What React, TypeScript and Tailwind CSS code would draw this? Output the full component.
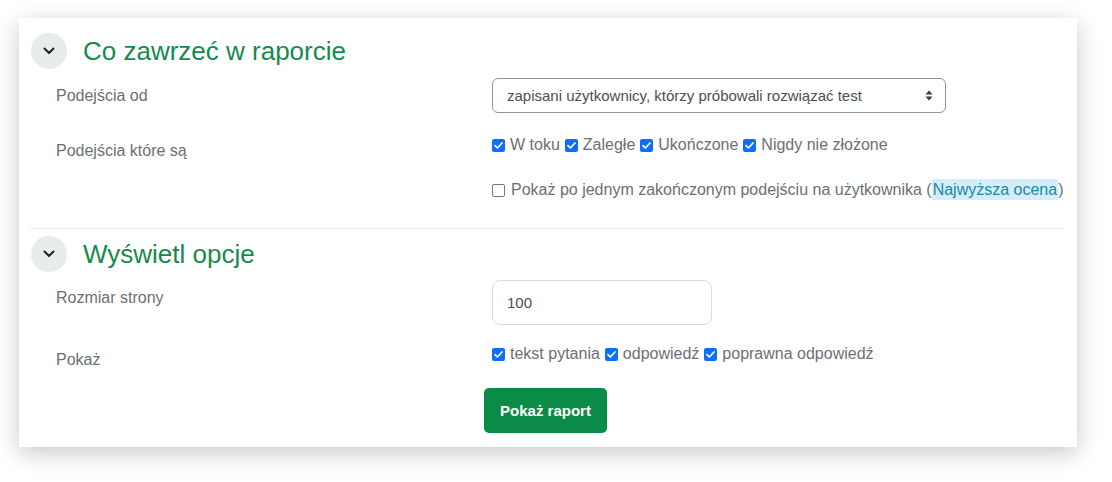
import React from 'react'

const font = { fontFamily: '"Liberation Sans", Arial, sans-serif' }

function Chevron() {
  return (
    <div className="w-9 h-9 rounded-full bg-[#e7eeea] flex items-center justify-center shrink-0">
      <svg width="12" height="8" viewBox="0 0 12 8" fill="none">
        <path d="M1.5 1.5 6 6l4.5-4.5" stroke="#1d2125" strokeWidth="2" strokeLinecap="round" strokeLinejoin="round" />
      </svg>
    </div>
  )
}

function Box({ checked = true }: { checked?: boolean }) {
  return checked ? (
    <span className="inline-flex w-[13px] h-[13px] rounded-[2px] bg-[#0d6efd] items-center justify-center shrink-0">
      <svg width="9" height="7" viewBox="0 0 9 7" fill="none">
        <path d="M1 3.6 3.4 6 8 1" stroke="#fff" strokeWidth="1.7" strokeLinecap="round" strokeLinejoin="round" />
      </svg>
    </span>
  ) : (
    <span className="inline-block w-[13px] h-[13px] rounded-[2px] border border-[#767676] bg-white shrink-0" />
  )
}

function Check({ label, checked = true }: { label: string; checked?: boolean }) {
  return (
    <span className="inline-flex items-center gap-[5px] mr-[5px]">
      <Box checked={checked} />
      <span>{label}</span>
    </span>
  )
}

function Section({ title, children }: { title: string; children: React.ReactNode }) {
  return (
    <div>
      <div className="flex items-center gap-4 h-9">
        <Chevron />
        <h2 className="text-[26px] text-[#158a4c] leading-none">{title}</h2>
      </div>
      {children}
    </div>
  )
}

export default function App() {
  return (
    <div className="bg-white w-[1112px] h-[482px] pt-[18px] pl-[19px]" style={font}>
      <div className="w-[1058px] h-[429px] bg-white shadow-[0_6px_22px_rgba(0,0,0,0.22)] pt-[15px] px-3 text-[16px] leading-[24px] text-[#6c7075]">
        <Section title="Co zawrzeć w raporcie">
          <div className="grid grid-cols-[436px_1fr] pl-[25px] mt-[9px]">
            <div className="pt-[6px]">Podejścia od</div>
            <div>
              <div className="w-[454px] h-[35px] border border-[#8f959e] rounded-[6px] flex items-center justify-between pl-[14px] pr-[12px] text-[15px] text-[#495057]">
                <span>zapisani użytkownicy, którzy próbowali rozwiązać test</span>
                <svg width="8" height="11" viewBox="0 0 8 11">
                  <path d="M4 0.5 7.5 4.5H0.5z M4 10.5 0.5 6.5H7.5z" fill="#343a40" />
                </svg>
              </div>
            </div>
            <div className="pt-[26px]">Podejścia które są</div>
            <div className="pt-[20px] flex items-center self-start">
              <Check label="W toku" />
              <Check label="Zaległe" />
              <Check label="Ukończone" />
              <Check label="Nigdy nie złożone" />
            </div>
            <div />
            <div className="pt-[15px] flex items-center">
              <span className="inline-flex items-center gap-[6px]">
                <Box checked={false} />
                <span>
                  Pokaż po jednym zakończonym podejściu na użytkownika (
                  <span className="bg-[#d3eef8] text-[#1a8aa3] px-[1px] py-[2px]">Najwyższa ocena</span>)
                </span>
              </span>
            </div>
          </div>
        </Section>
        <div className="h-px bg-[#e3e5e8] mt-[26px] mb-[7px] mr-[2px]" />
        <Section title="Wyświetl opcje">
          <div className="grid grid-cols-[436px_1fr] pl-[25px] mt-[8px]">
            <div className="pt-[6px]">Rozmiar strony</div>
            <div>
              <div className="w-[220px] h-[45px] border border-[#dadde1] rounded-[8px] flex items-center pl-[14px] text-[15px] text-[#495057]">
                100
              </div>
            </div>
            <div className="pt-[23px]">Pokaż</div>
            <div className="pt-[17px] flex items-center self-start">
              <Check label="tekst pytania" />
              <Check label="odpowiedź" />
              <Check label="poprawna odpowiedź" />
            </div>
          </div>
          <div className="pl-[453px] mt-[16px]">
            <button className="w-[123px] h-[45px] rounded-[5px] bg-[#0a8b48] text-white font-bold text-[15px]">
              Pokaż raport
            </button>
          </div>
        </Section>
      </div>
    </div>
  )
}
